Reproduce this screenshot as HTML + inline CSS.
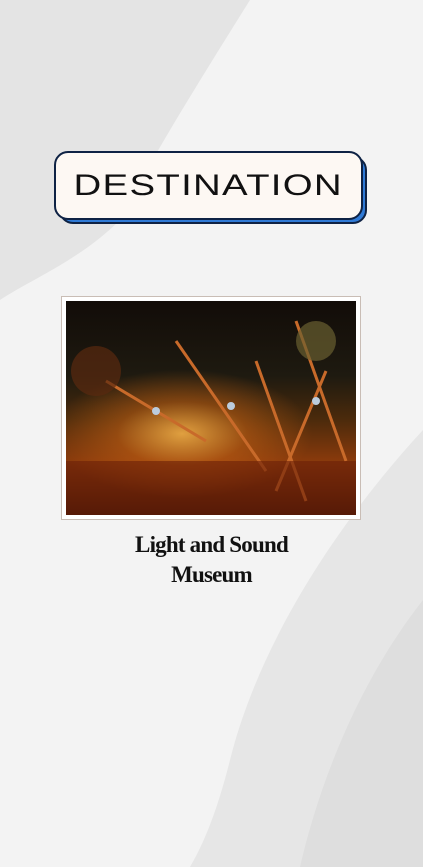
<!DOCTYPE html>
<html><head><style>
html,body{margin:0;padding:0;width:423px;height:867px;overflow:hidden;background:#f3f3f3;font-family:"Liberation Sans",sans-serif}
.bg{position:absolute;left:0;top:0}
.btnsh{position:absolute;left:59px;top:156px;width:308px;height:68px;background:#2f7ad6;border:2px solid #0e2244;border-radius:14px;box-sizing:border-box}
.btn{position:absolute;left:54px;top:151px;width:309px;height:69px;background:#fdf8f3;border:2px solid #0e2244;border-radius:14px;box-sizing:border-box;text-align:center;line-height:66px;font-size:30px;letter-spacing:1px;color:#111}
.btn span{display:inline-block;transform:scaleX(1.28)}
.frame{position:absolute;left:61px;top:296px;width:300px;height:224px;background:#fff;border:1px solid #c9bdb5;box-sizing:border-box}
.photo{position:absolute;left:66px;top:301px;width:290px;height:214px;overflow:hidden;
background:radial-gradient(ellipse 45% 30% at 40% 62%,#e0a040 0%,rgba(200,100,20,.5) 50%,rgba(0,0,0,0) 100%),
linear-gradient(180deg,#120c08 0%,#1e1a10 35%,#4a2a0c 55%,#8a3a0c 75%,#3a1204 100%)}
.cap{position:absolute;left:0;width:423px;text-align:center;font-family:"Liberation Serif",serif;font-weight:bold;font-size:23px;color:#111;letter-spacing:-0.8px}
</style></head><body>
<svg class="bg" width="423" height="867">
<path d="M0 0 H250 C200 80 150 160 120 220 C80 260 30 280 0 300 Z" fill="#e4e4e4"/>
<path d="M423 430 C340 520 260 640 230 760 C215 820 200 850 190 867 H423 Z" fill="#e6e6e6"/>
<path d="M423 600 C360 680 320 780 300 867 H423 Z" fill="#dedede"/>
</svg>
<div class="btnsh"></div>
<div class="btn"><span>DESTINATION</span></div>
<div class="frame"></div>
<div class="photo">
<svg width="290" height="214">
<g stroke="#c86a2a" stroke-width="3">
<line x1="110" y1="40" x2="200" y2="170"/><line x1="230" y1="20" x2="280" y2="160"/><line x1="190" y1="60" x2="240" y2="200"/><line x1="40" y1="80" x2="140" y2="140"/><line x1="260" y1="70" x2="210" y2="190"/>
</g>
<rect x="0" y="160" width="290" height="54" fill="#6a2008" opacity=".6"/>
<circle cx="30" cy="70" r="25" fill="#5a2a10" opacity=".7"/>
<circle cx="250" cy="40" r="20" fill="#6a6030" opacity=".7"/>
<circle cx="90" cy="110" r="4" fill="#bcd"/><circle cx="165" cy="105" r="4" fill="#bcd"/><circle cx="250" cy="100" r="4" fill="#bcd"/>
</svg>
</div>
<div class="cap" style="top:532px">Light and Sound</div>
<div class="cap" style="top:562px">Museum</div>
</body></html>
